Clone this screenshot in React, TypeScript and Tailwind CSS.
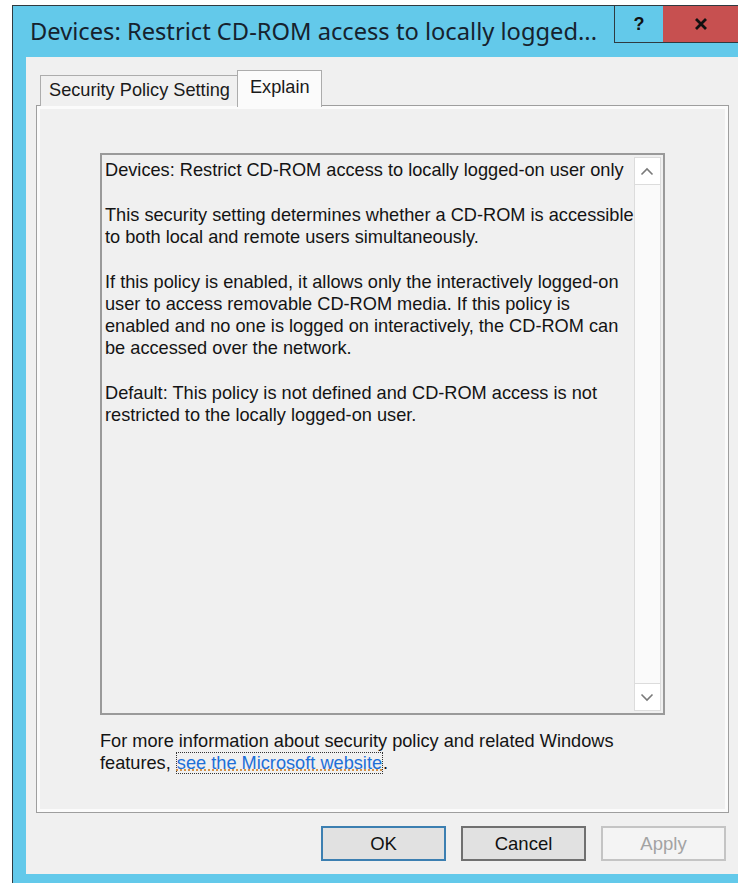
import React from 'react';

const explainLines: string[][] = [
  ['Devices: Restrict CD-ROM access to locally logged-on user only'],
  [
    'This security setting determines whether a CD-ROM is accessible',
    'to both local and remote users simultaneously.',
  ],
  [
    'If this policy is enabled, it allows only the interactively logged-on',
    'user to access removable CD-ROM media. If this policy is',
    'enabled and no one is logged on interactively, the CD-ROM can',
    'be accessed over the network.',
  ],
  [
    'Default: This policy is not defined and CD-ROM access is not',
    'restricted to the locally logged-on user.',
  ],
];

const uiFont = { fontFamily: '"Liberation Sans", Arial, sans-serif' };

function Chevron({ up }: { up?: boolean }) {
  return (
    <svg width="14" height="9" viewBox="0 0 14 9" fill="none" stroke="#7a7a7a" strokeWidth="1.6">
      {up ? <path d="M1.5 7.5 L7 2 L12.5 7.5" /> : <path d="M1.5 1.5 L7 7 L12.5 1.5" />}
    </svg>
  );
}

function DialogButton({
  label,
  variant,
}: {
  label: string;
  variant: 'default' | 'normal' | 'disabled';
}) {
  const styles = {
    default: 'border-[#3c7fb1] bg-[#e1e1e1] text-[#111]',
    normal: 'border-[#707070] bg-[#e1e1e1] text-[#111]',
    disabled: 'border-[#c4c4c4] bg-[#f4f4f4] text-[#a3a3a3]',
  }[variant];
  return (
    <button
      className={`w-[125px] h-[35px] border-2 ${styles} text-[18.5px] flex items-center justify-center`}
      style={uiFont}
    >
      {label}
    </button>
  );
}

export default function App() {
  return (
    <div className="w-[738px] h-[883px] bg-white pl-[12px] pt-[5px] overflow-hidden">
      <div className="w-[726px] h-[878px] flex flex-col bg-[#63c9ea] border-l border-t border-[#2f3a40]">
        {/* caption */}
        <div className="h-[51px] flex items-start justify-between shrink-0">
          <div
            className="pl-[17px] pt-[10px] text-[23.7px] leading-[30px] text-[#16222e] whitespace-nowrap"
            style={{ fontFamily: '"Noto Sans", "Open Sans", sans-serif' }}
          >
            Devices: Restrict CD-ROM access to locally logged...
          </div>
          <div className="flex -mt-px">
            <div className="w-[49px] h-[38px] border-l border-t border-b border-[#2f3a40] bg-[#63c9ea] flex items-center justify-center text-[18px] font-bold text-[#111]" style={uiFont}>
              ?
            </div>
            <div className="w-[75px] h-[38px] border-t border-b border-[#2f3a40] bg-[#c75050] flex items-center justify-center">
              <svg width="14" height="12" viewBox="0 0 14 12">
                <path d="M2 1 L12 11 M12 1 L2 11" stroke="#111" strokeWidth="2.8" />
              </svg>
            </div>
          </div>
        </div>

        {/* client area */}
        <div className="flex-1 ml-[13px] mb-[9px] bg-[#f0f0f0] flex flex-col px-[10px] pt-[10px]" style={uiFont}>
          {/* tab strip */}
          <div className="flex items-end h-[38px] pl-[4px] relative z-10">
            <div className="h-[31px] pl-[8px] pr-[7px] flex items-center border border-b-0 border-[#acacac] bg-[#f0f0f0] text-[18.2px] text-[#1a1a1a] -mb-px">
              Security Policy Setting
            </div>
            <div className="h-[37px] w-[85px] px-[12px] pb-[3px] flex items-center border border-b-0 border-[#acacac] bg-[#fbfbfb] text-[18.2px] text-[#1a1a1a] -ml-px -mb-[2px]">
              Explain
            </div>
          </div>

          {/* tab page */}
          <div className="w-[693px] h-[708px] border border-[#9e9e9e] shrink-0">
            <div className="w-full h-full border-[3px] border-[#fbfbfb] flex flex-col pl-[60px] pt-[44px]">
              <div className="w-[565px] h-[562px] border-2 border-[#9a9a9a] flex">
                <div className="flex-1 pl-[3px] pt-[4px] text-[18.2px] leading-[22px] text-[#141414]">
                  {explainLines.map((para, i) => (
                    <div key={i} className="mb-[23px]">
                      {para.map((line) => (
                        <div key={line} className="whitespace-nowrap">
                          {line}
                        </div>
                      ))}
                    </div>
                  ))}
                </div>
                {/* vertical scrollbar */}
                <div className="w-[28px] my-[2px] mr-[2px] flex flex-col border border-[#dcdcdc] bg-[#fafafa]">
                  <div className="h-[27px] bg-white border-b border-[#dcdcdc] flex items-center justify-center">
                    <Chevron up />
                  </div>
                  <div className="flex-1" />
                  <div className="h-[27px] bg-white border-t border-[#dcdcdc] flex items-center justify-center">
                    <Chevron />
                  </div>
                </div>
              </div>

              <div className="mt-[15px] text-[18.2px] leading-[22px] text-[#141414]">
                <div className="whitespace-nowrap">For more information about security policy and related Windows</div>
                <div className="whitespace-nowrap">
                  features,{' '}
                  <span className="border border-dotted border-[#333] text-[#1d6fd8] underline decoration-dotted decoration-[#d08a3c]">
                    see the Microsoft website
                  </span>
                  .
                </div>
              </div>
            </div>
          </div>

          {/* dialog buttons */}
          <div className="flex justify-end gap-[15px] mt-[13px] pr-[2px]">
            <DialogButton label="OK" variant="default" />
            <DialogButton label="Cancel" variant="normal" />
            <DialogButton label="Apply" variant="disabled" />
          </div>
        </div>
      </div>
    </div>
  );
}
